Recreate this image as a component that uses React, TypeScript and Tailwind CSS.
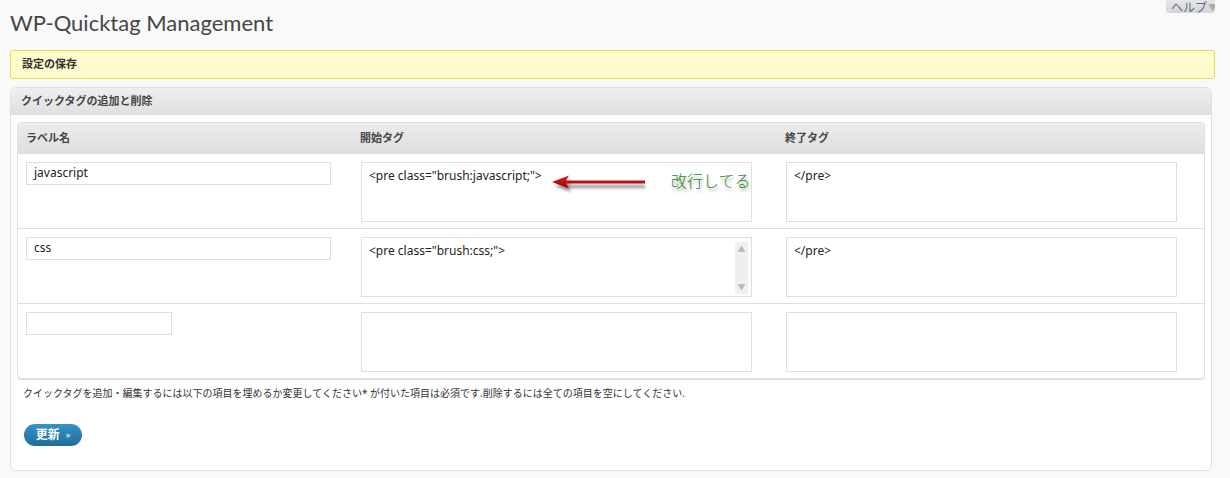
import React from "react"

const font = { fontFamily: '"Noto Sans", "Noto Sans CJK JP", sans-serif' }

function TagArea({ value, scroll }: { value?: string; scroll?: boolean }) {
  return (
    <div className="relative h-[60px] w-[391px] border border-[#dfdfdf] bg-white px-[7px] pt-[5px] text-[12px] leading-[16px] text-[#222]">
      {value}
      {scroll && (
        <div className="absolute right-[3px] top-[4px] flex h-[52px] w-[13px] flex-col items-center justify-between bg-[#efefef] py-[2px] text-[8px] leading-[10px] text-[#b9b9b9]">
          <span>▲</span>
          <span>▼</span>
        </div>
      )}
    </div>
  )
}

function Row({ label, start, end, short, scroll, last, children }: {
  label?: string
  start?: string
  end?: string
  short?: boolean
  scroll?: boolean
  last?: boolean
  children?: React.ReactNode
}) {
  return (
    <div className={`relative grid grid-cols-[334px_425px_1fr] pt-[8px] pb-[6px] ${last ? "" : "border-b border-[#dfdfdf]"}`}>
      <div className="pl-2">
        <div className={`h-[23px] border border-[#dfdfdf] bg-white px-[7px] text-[12px] leading-[20px] text-[#222] ${short ? "w-[146px]" : "w-[305px]"}`}>
          {label}
        </div>
      </div>
      <div className="pl-[9px]">
        <TagArea value={start} scroll={scroll} />
      </div>
      <div className="pl-[9px]">
        <TagArea value={end} />
      </div>
      {children}
    </div>
  )
}

function Note() {
  return (
    <div className="absolute left-[514px] top-[19px] flex items-center">
      <svg width="115" height="24" viewBox="0 0 115 24">
        <defs>
          <filter id="sh" x="-20%" y="-50%" width="140%" height="200%">
            <feGaussianBlur stdDeviation="1.6" />
          </filter>
          <linearGradient id="ar" x1="0" y1="0" x2="0" y2="1">
            <stop offset="0" stopColor="#d92020" />
            <stop offset="1" stopColor="#9a0000" />
          </linearGradient>
        </defs>
        <g transform="translate(3,4)" fill="#777" filter="url(#sh)" opacity="0.8">
          <path d="M20 9 L36 3 L34 8 L110 8 L110 11 L34 11 L36 15 Z" />
        </g>
        <path d="M20 9 L37 2.5 L34 7.6 L113 7.6 L113 10.6 L34 10.6 L37 15.5 Z" fill="url(#ar)" />
      </svg>
      <span
        className="ml-[24px] -mt-[8px] text-[16px] leading-[18px] font-light text-[#1f8a1f]"
        style={{ textShadow: "1px 3px 3px rgba(0,0,0,0.35)" }}
      >
        改行してる
      </span>
    </div>
  )
}

export default function App() {
  return (
    <div className="relative min-h-[478px] bg-[#f9f9f9] px-[10px] text-[#333]" style={font}>
      {/* help tab */}
      <div className="absolute right-[15px] top-0 flex h-[13px] w-[49px] items-end overflow-hidden whitespace-nowrap rounded-b-[3px] bg-gradient-to-b from-[#e6e6e6] to-[#d5d5d5] pl-[5px]">
        <span className="-mb-[2px] shrink-0 text-[12px] leading-[15px] text-[#5c6f93]">ヘルプ</span>
        <span className="-mb-[1px] ml-[1px] shrink-0 text-[9px] leading-[13px] text-[#aaa]">▼</span>
      </div>

      <h2 className="pt-[8px] text-[22px] leading-[30px] text-[#464646]" style={{ fontFamily: 'Lato, "Noto Sans", sans-serif' }}>
        WP-Quicktag Management
      </h2>

      <div className="mt-[12px] mr-[5px] flex h-[29px] items-center rounded-[3px] border border-[#e6db55] bg-[#fffbcc] px-[11px] text-[11px] font-bold text-[#333]">
        設定の保存
      </div>

      <div className="mt-[8px] mr-[8px] rounded-[6px] border border-[#dfdfdf] bg-white">
        <div className="flex h-[27px] items-center rounded-t-[6px] bg-gradient-to-b from-[#efefef] to-[#dfdfdf] pl-[10px] text-[11px] font-bold text-[#464646]">
          クイックタグの追加と削除
        </div>

        <div className="px-[6px] pt-[7px] pb-[24px]">
          <div className="rounded-[4px] border border-[#dfdfdf] shadow-[0_1px_0_#dfdfdf]">
            <div className="grid h-[31px] grid-cols-[334px_425px_1fr] items-center rounded-t-[4px] bg-gradient-to-b from-[#ececec] to-[#dedede] text-[11px] font-bold text-[#464646]">
              <div className="pl-2">ラベル名</div>
              <div className="pl-[8px]">開始タグ</div>
              <div className="pl-[8px]">終了タグ</div>
            </div>
            <Row label="javascript" start={'<pre class="brush:javascript;">'} end="</pre>">
              <Note />
            </Row>
            <Row label="css" start={'<pre class="brush:css;">'} end="</pre>" scroll />
            <Row short last />
          </div>

          <p className="mt-[7px] pl-[6px] text-[10px] leading-[14px] text-[#333]">
            クイックタグを追加・編集するには以下の項目を埋めるか変更してください* が付いた項目は必須です.削除するには全ての項目を空にしてください.
          </p>

          <button className="mt-[24px] ml-[7px] flex h-[22px] w-[58px] items-center justify-center gap-[6px] rounded-full bg-gradient-to-b from-[#3594c6] to-[#1f6e96] text-[12px] font-bold text-white">
            更新 <span className="text-[9px] font-normal">»</span>
          </button>
        </div>
      </div>
    </div>
  )
}
